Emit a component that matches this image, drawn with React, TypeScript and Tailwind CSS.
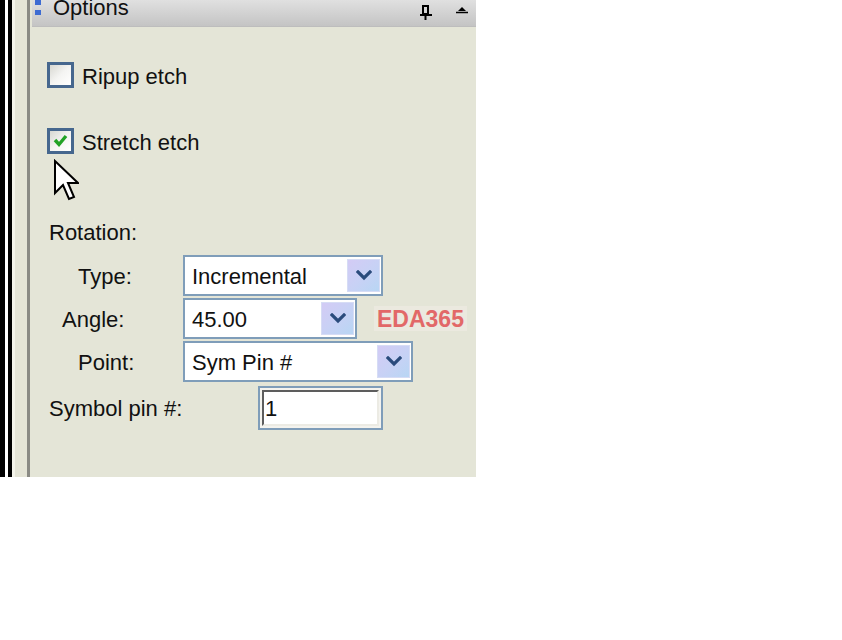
import { ReactNode } from "react";

const Chevron = () => (
  <svg width="16" height="11" viewBox="0 0 16 11">
    <path d="M2 2 L8 8 L14 2" fill="none" stroke="#2a4b7c" strokeWidth="3.2" strokeLinecap="square" />
  </svg>
);

const Combo = ({ value, width }: { value: string; width: string }) => (
  <div className={`${width} h-[41px] flex items-center border-2 border-[#7f9db9] bg-white`}>
    <span className="flex-1 pl-[7px] pt-[2px] text-[22px] leading-none text-[#111]">{value}</span>
    <div className="w-[33px] h-[33px] mr-[1px] flex items-center justify-center bg-gradient-to-br from-[#d3cbf5] via-[#c8d1f5] to-[#b8d6f4] border border-[#d6dcf5]">
      <Chevron />
    </div>
  </div>
);

const Checkbox = ({ checked }: { checked?: boolean }) => (
  <div className="w-[27px] h-[26px] border-[3px] border-[#46678e] bg-gradient-to-br from-[#d8d8d2] via-[#f4f4f2] to-white flex items-center justify-center">
    {checked && (
      <svg width="21" height="20" viewBox="0 0 21 20">
        <path d="M5 9 L9 13.5 L16 5" fill="none" stroke="#22a226" strokeWidth="3.4" />
      </svg>
    )}
  </div>
);

const Row = ({ label, pad, children }: { label: string; pad: string; children: ReactNode }) => (
  <div className="flex items-center h-[41px] mt-[2px]">
    <div className={`w-[134px] ${pad} pt-[2px] text-[22px] leading-none text-[#111]`}>{label}</div>
    {children}
  </div>
);

export default function App() {
  return (
    <div className="relative w-[842px] h-[640px] bg-white font-['Liberation_Sans',Arial,sans-serif]">
      <div className="flex w-[476px] h-[477px]">
        {/* window edges on the left */}
        <div className="w-[5px] bg-black" />
        <div className="w-[3px] bg-white" />
        <div className="w-[4px] bg-black" />
        <div className="w-[3px] bg-[#f3f3ea]" />
        <div className="w-[12px] bg-[#e4e4d6]" />
        <div className="w-[3px] bg-[#8a8a84]" />

        <div className="flex-1 flex flex-col bg-[#e4e5d7]">
          <div className="ml-[2px] h-[27px] flex items-start bg-gradient-to-b from-[#e0e0e0] via-[#d2d2d2] to-[#c4c4c4] border-b border-[#bdbdbd] overflow-hidden">
            <div className="flex flex-col gap-[5px] ml-[3px] mt-0">
              <div className="w-[6px] h-[5px] bg-[#3d6bd2]" />
              <div className="w-[6px] h-[5px] bg-[#3d6bd2]" />
            </div>
            <span className="ml-[12px] mt-[-3px] text-[22px] leading-[22px] text-[#111]">Options</span>
            <div className="flex-1" />
            <svg width="14" height="15" viewBox="0 0 14 15" className="mt-[5px]">
              <path d="M4 1 H9 V9 H4 Z" fill="none" stroke="#000" strokeWidth="2" />
              <path d="M1 10 H13" stroke="#000" strokeWidth="2" />
              <path d="M6.5 10 V15" stroke="#000" strokeWidth="2" />
            </svg>
            <svg width="12" height="8" viewBox="0 0 12 8" className="ml-[23px] mr-[8px] mt-[6px]">
              <path d="M6 1 L10 5 H2 Z" fill="#000" />
              <path d="M0 6.5 H12" stroke="#000" strokeWidth="1.5" />
            </svg>
          </div>

          <div className="flex flex-col pl-[17px]">
            <div className="flex items-center mt-[35px]">
              <Checkbox />
              <span className="ml-[8px] pt-[3px] text-[22px] leading-none text-[#111]">Ripup etch</span>
            </div>
            <div className="flex items-center mt-[40px]">
              <Checkbox checked />
              <span className="ml-[8px] pt-[3px] text-[22px] leading-none text-[#111]">Stretch etch</span>
            </div>

            <div className="pl-[2px] mt-[68px] text-[22px] leading-[22px] text-[#111]">Rotation:</div>

            <div className="pl-[2px] mt-[9px]">
              <Row label="Type:" pad="pl-[29px]">
                <Combo value="Incremental" width="w-[200px]" />
              </Row>
              <Row label="Angle:" pad="pl-[13px]">
                <Combo value="45.00" width="w-[174px]" />
                <span className="ml-[17px] px-[3px] pt-[2px] bg-[#ebe9df] text-[23px] leading-none font-bold text-[#e26868]">EDA365</span>
              </Row>
              <Row label="Point:" pad="pl-[29px]">
                <Combo value="Sym Pin #" width="w-[230px]" />
              </Row>
              <div className="flex items-center h-[44px] mt-[4px]">
                <div className="w-[209px] pt-[2px] text-[22px] leading-none text-[#111]">Symbol pin #:</div>
                <div className="w-[125px] h-[44px] border-2 border-[#7f9db9] p-[2px] bg-[#f4f3ee]">
                  <div className="h-full flex items-center bg-white border-t-2 border-l-2 border-[#5d5d5d] border-r-2 border-b-2 border-r-[#ecebe4] border-b-[#ecebe4]">
                    <span className="pl-[1px] pt-[2px] text-[22px] leading-none text-[#111]">1</span>
                  </div>
                </div>
              </div>
            </div>
          </div>
        </div>
      </div>

      {/* mouse pointer */}
      <svg width="26" height="44" viewBox="0 0 13 22" className="absolute left-[53px] top-[159px]">
        <path d="M1 1 L1 17 L5 13 L8 20 L10.5 19 L7.5 12 L12.5 12 Z" fill="#fff" stroke="#000" strokeWidth="1" strokeLinejoin="miter" />
      </svg>
    </div>
  );
}
